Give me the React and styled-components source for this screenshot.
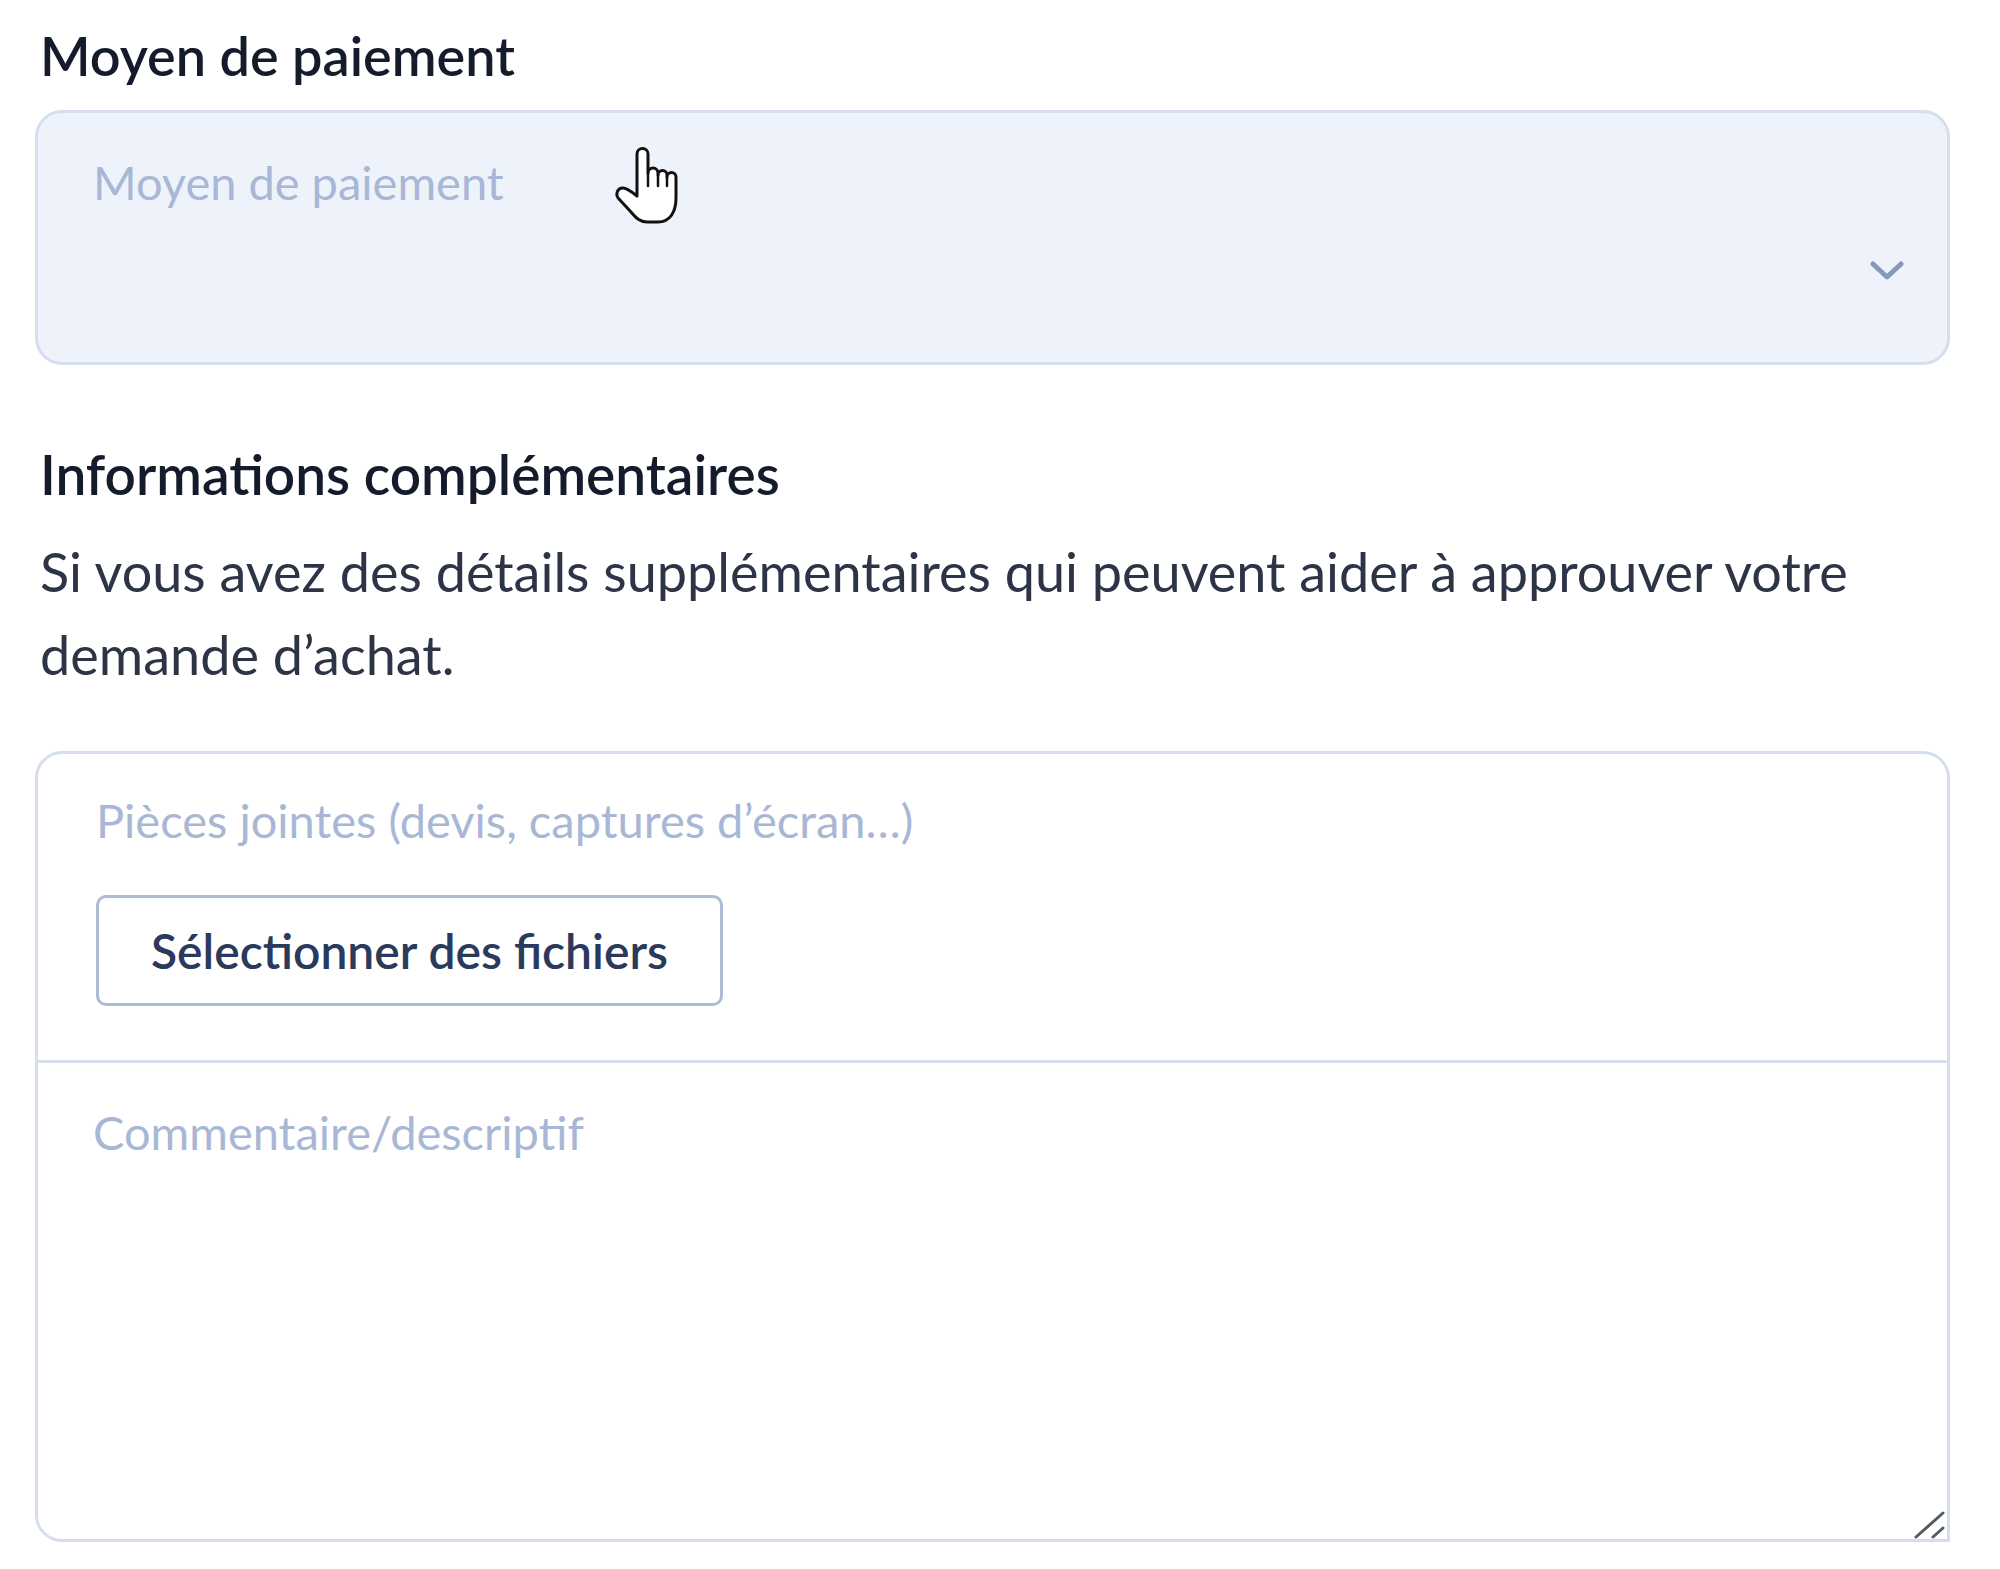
import React from 'react';
import styled, { createGlobalStyle } from 'styled-components';

const GlobalStyle = createGlobalStyle`
  html, body {
    margin: 0;
    padding: 0;
    background: #ffffff;
  }
  body {
    font-family: Lato, "Liberation Sans", sans-serif;
  }
`;

const Page = styled.div`
  position: relative;
  width: 1915px;
  padding: 24px 0 0 35px;
`;

const Label = styled.h2`
  margin: ${(p) => p.$top || 0}px 0 0 5px;
  font-size: ${(p) => p.$size || 54}px;
  line-height: 64px;
  font-weight: 600;
  color: #141b2b;
`;

const Select = styled.div`
  box-sizing: border-box;
  display: flex;
  justify-content: space-between;
  align-items: flex-start;
  height: 255px;
  margin-top: 22px;
  padding: 41px 43px 0 55px;
  background: #eef3fb;
  border: 3px solid #d5deef;
  border-radius: 27px;
  cursor: pointer;
`;

const Placeholder = styled.span`
  font-size: 47px;
  line-height: 56px;
  color: #a8b7d5;
`;

const Chevron = styled.svg`
  align-self: flex-end;
  margin-bottom: 81px;
`;

const Help = styled.p`
  margin: 24px 0 0 5px;
  font-size: 54px;
  line-height: 83px;
  color: #2c3446;
`;

const Group = styled.div`
  margin-top: 55px;
  border: 3px solid #d5deef;
  border-radius: 27px 27px 0 27px;
  overflow: hidden;
`;

const Upload = styled.div`
  display: flex;
  flex-direction: column;
  align-items: flex-start;
  gap: 47px;
  padding: 38px 58px 54px;
  border-bottom: 3px solid #d5deef;
`;

const FileButton = styled.button`
  box-sizing: border-box;
  height: 111px;
  padding: 0 52px;
  background: #ffffff;
  border: 3px solid #adbbd7;
  border-radius: 10px;
  font-family: Lato, "Liberation Sans", sans-serif;
  font-size: 48px;
  font-weight: 600;
  color: #2a395c;
  cursor: pointer;
`;

const CommentWrap = styled.div`
  position: relative;
  height: 476px;
`;

const Comment = styled.textarea`
  box-sizing: border-box;
  display: block;
  width: 100%;
  height: 100%;
  padding: 41px 55px;
  border: none;
  outline: none;
  resize: none;
  font-family: Lato, "Liberation Sans", sans-serif;
  font-size: 47px;
  line-height: 56px;
  color: #2c3446;

  &::placeholder {
    color: #a8b7d5;
  }
`;

const Grip = styled.svg`
  position: absolute;
  right: 1px;
  bottom: 0;
`;

const Pointer = styled.svg`
  position: absolute;
  left: 614px;
  top: 146px;
  pointer-events: none;
`;

function HandCursor() {
  return (
    <Pointer width="66" height="80" viewBox="0 0 66 80">
      <path
        d="M23 50 L23 8 a5.5 5.5 0 0 1 11 0 V27 a5 5 0 0 1 10 0 v2 a4.5 4.5 0 0 1 9 0 v2 a4.5 4.5 0 0 1 9 0 V52 C62 66 56 76 44 76 L33 76 C26 76 22 72 17 66 L5 53 C1 49 3 42 9 42 C13 42 18 46 23 50 Z"
        fill="#ffffff"
        stroke="#111111"
        strokeWidth="3"
        strokeLinejoin="round"
      />
      <path d="M34 27 V40 M44 29 V40 M53 31 V40" stroke="#111111" strokeWidth="2.5" strokeLinecap="round" />
    </Pointer>
  );
}

export default function App() {
  return (
    <>
      <GlobalStyle />
      <Page>
        <Label>Moyen de paiement</Label>
        <Select>
          <Placeholder>Moyen de paiement</Placeholder>
          <Chevron width="34" height="20" viewBox="0 0 34 20">
            <polyline
              points="3,3 17,16 31,3"
              fill="none"
              stroke="#8698bc"
              strokeWidth="5"
              strokeLinecap="round"
              strokeLinejoin="round"
            />
          </Chevron>
        </Select>

        <Label $top={77} $size={55}>Informations complémentaires</Label>
        <Help>
          Si vous avez des détails supplémentaires qui peuvent aider à approuver votre demande d’achat.
        </Help>

        <Group>
          <Upload>
            <Placeholder>Pièces jointes (devis, captures d’écran…)</Placeholder>
            <FileButton type="button">Sélectionner des fichiers</FileButton>
          </Upload>
          <CommentWrap>
            <Comment placeholder="Commentaire/descriptif" />
            <Grip width="34" height="30" viewBox="0 0 34 30">
              <path d="M4 28 L31 4 M21 28 L31 19" stroke="#555a60" strokeWidth="3" strokeLinecap="round" />
            </Grip>
          </CommentWrap>
        </Group>

        <HandCursor />
      </Page>
    </>
  );
}
